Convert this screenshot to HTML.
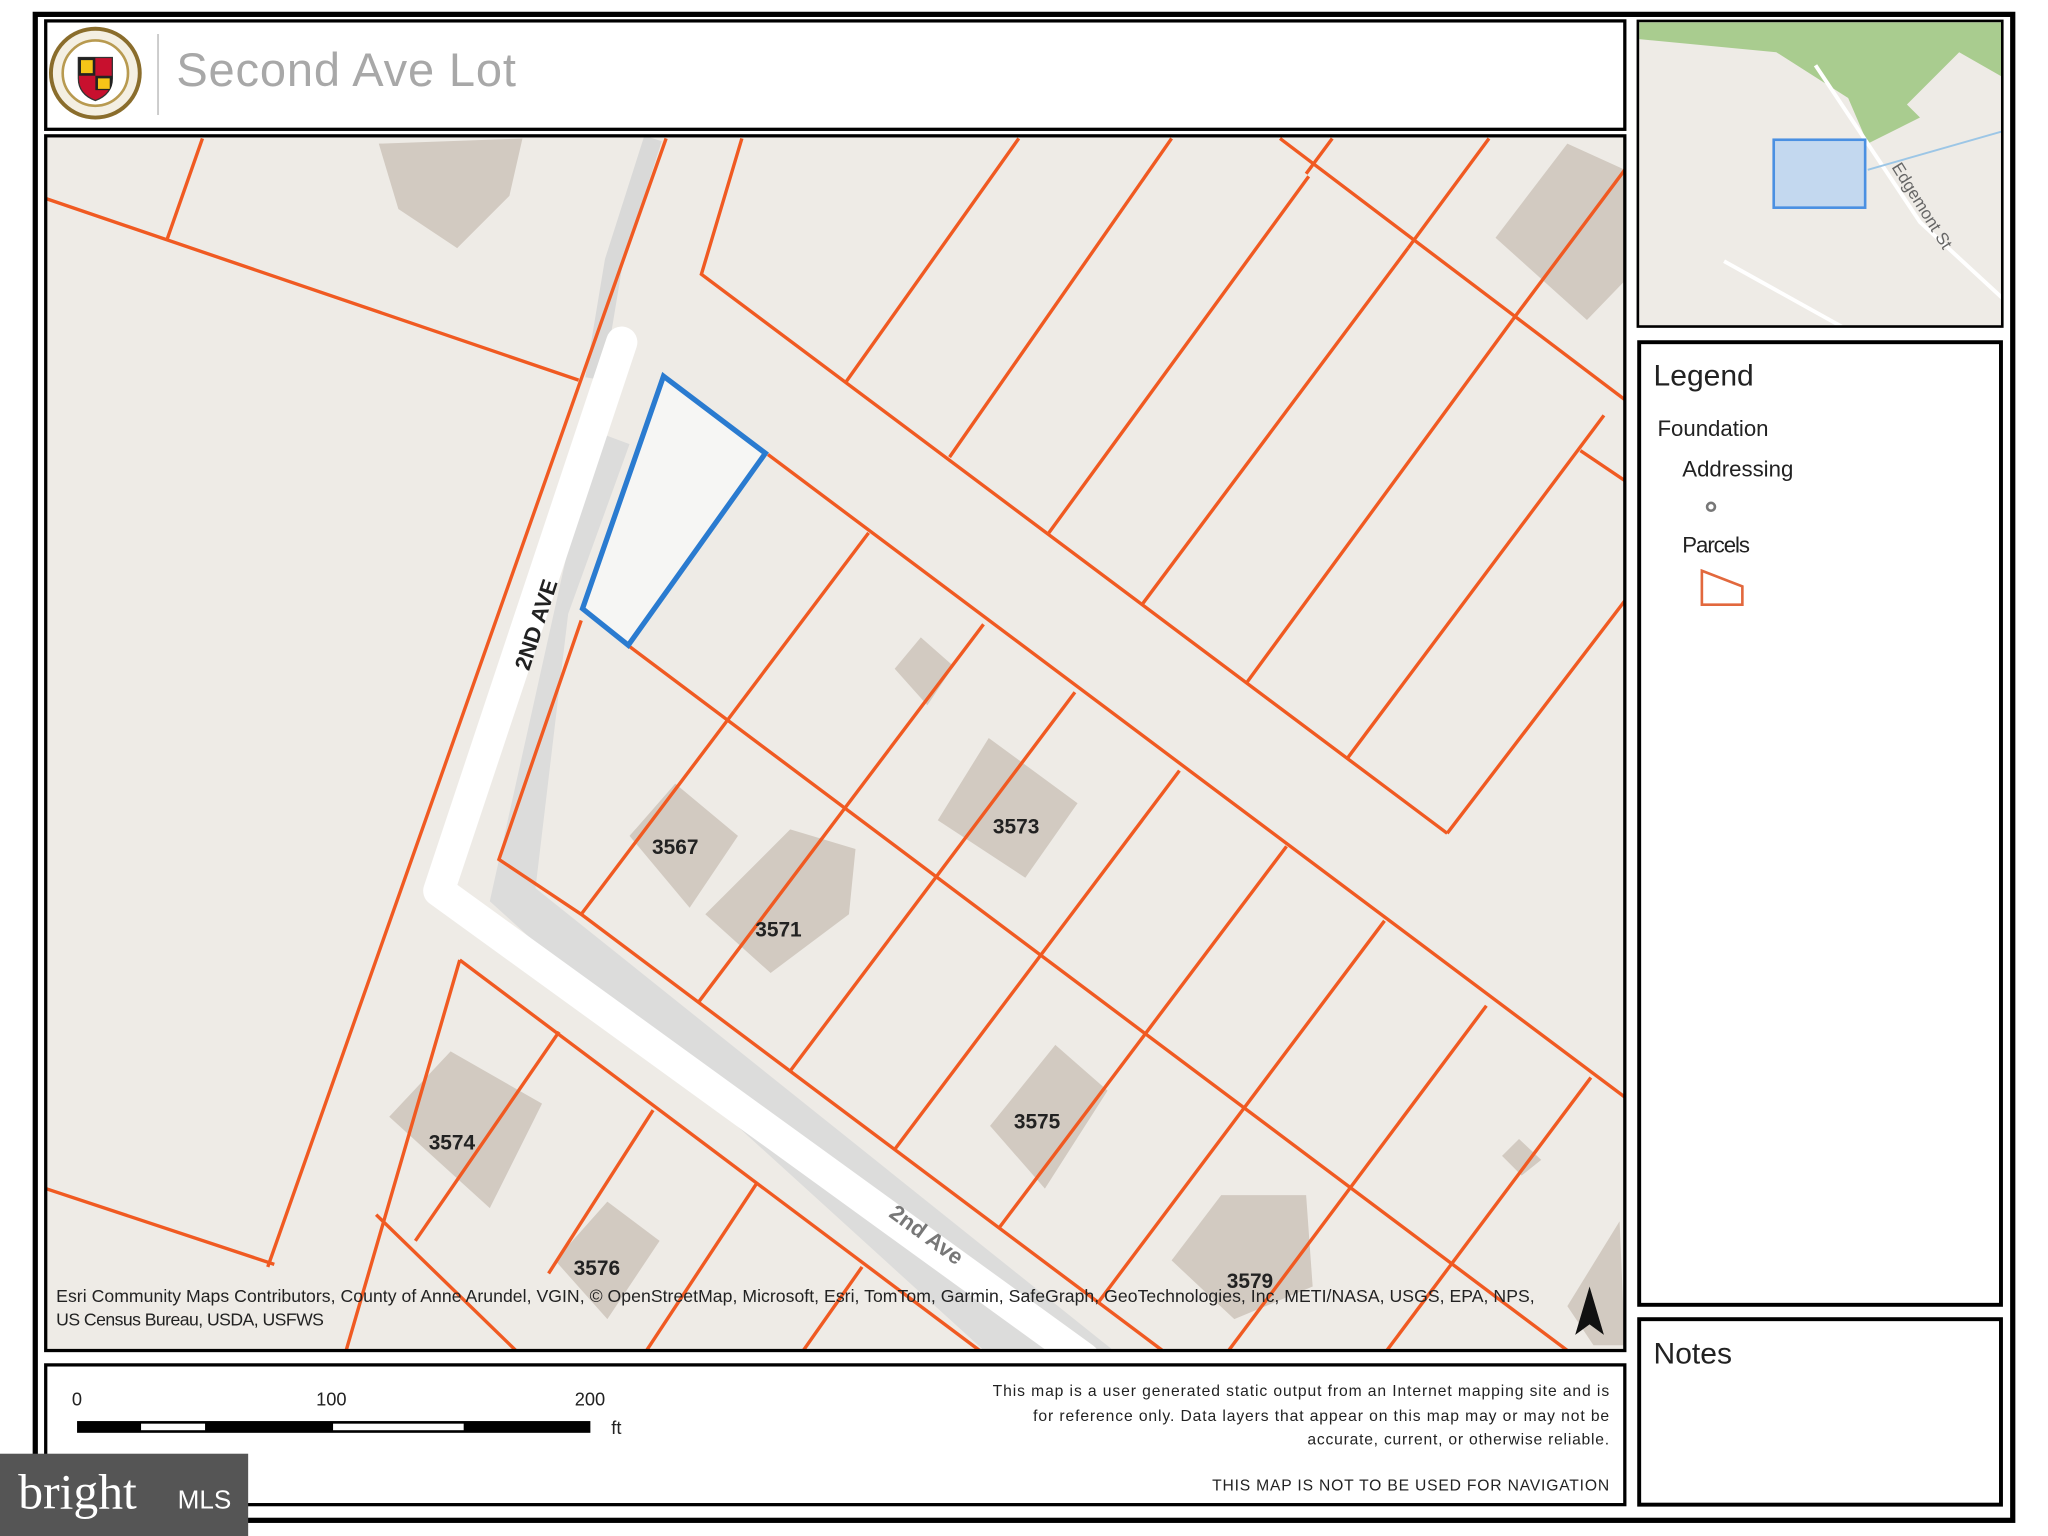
<!DOCTYPE html>
<html><head><meta charset="utf-8"><style>html,body{margin:0;padding:0;background:#fff;overflow:hidden}svg{display:block}</style></head>
<body>
<svg width="2048" height="1536" viewBox="0 0 1568 1176" preserveAspectRatio="none" xmlns="http://www.w3.org/2000/svg" font-family="Liberation Sans, sans-serif">
<rect width="1568" height="1176" fill="#fff"/>
<rect x="27" y="11" width="1514" height="1153" fill="none" stroke="#000" stroke-width="4"/>
<rect x="35" y="16" width="1209" height="83" fill="#fff" stroke="#000" stroke-width="2.5"/>
<circle cx="73" cy="56" r="34" fill="#f4efe2" stroke="#8a6d2c" stroke-width="3"/>
<circle cx="73" cy="56" r="25" fill="#fff" stroke="#b89a50" stroke-width="2"/>
<path d="M60 44h26v16q0 12-13 17q-13-5-13-17z" fill="#c8102e" stroke="#333" stroke-width="1"/>
<path d="M60 44h13v14h-13zM73 58h13v3q0 5-2 8h-11z" fill="#222"/>
<path d="M62 46h9v10h-9zM75 60h9v8h-9z" fill="#f5c518"/>
<line x1="121" y1="26" x2="121" y2="88" stroke="#ccc" stroke-width="1.5"/>
<text x="135" y="66" font-size="36" fill="#a8a8a8" textLength="260">Second Ave Lot</text>
<defs><clipPath id="mc"><rect x="36" y="105" width="1207" height="928"/></clipPath>
<clipPath id="oc"><rect x="1255" y="17" width="277" height="232"/></clipPath></defs>
<rect x="35" y="104" width="1209" height="930" fill="#eeebe6"/>
<g clip-path="url(#mc)">
<polygon points="455,330 482,340 435,470 410,680 860,1040 760,1040 375,690" fill="#dcdcdb"/>
<path d="M500 106 L470 200 L455 290" stroke="#d9d9d8" stroke-width="14" fill="none"/>
<path d="M476 262 L336 682 L830 1040" stroke="#fff" stroke-width="24" fill="none" stroke-linejoin="round" stroke-linecap="round"/>
<g fill="#d2cac1">
<polygon points="482,640 517,600 565,640 528,695"/>
<polygon points="540,700 605,635 655,650 650,700 590,745"/>
<polygon points="718,628 757,565 825,615 785,672"/>
<polygon points="758,862 808,800 848,835 800,910"/>
<polygon points="298,855 345,805 415,845 375,925"/>
<polygon points="425,965 465,920 505,950 465,1010"/>
<polygon points="897,965 935,915 1000,915 1005,985 945,1010"/>
<polygon points="685,512 705,488 730,510 710,540"/>
<polygon points="1150,885 1163,872 1180,888 1165,900"/>
<polygon points="290,110 400,106 390,150 350,190 305,160"/>
<polygon points="1145,182 1200,110 1244,130 1244,215 1215,245"/>
<polygon points="1200,1000 1240,935 1244,1030 1220,1030"/>
</g>
<g stroke="#f05a22" stroke-width="2.6" fill="none">
<path d="M35 152 L443 291"/><path d="M155 106 L128 183"/>
<path d="M510 106 L205 970"/><path d="M35 910 L210 968"/>
<path d="M568 106 L537 210 L1108 638"/>
<path d="M588 348 L1260 852"/><path d="M482 495 L1244 1067"/><path d="M445 700 L890 1034"/>
<path d="M445 475 L382 658 L445 700"/>
<path d="M665 408 L445 700"/><path d="M753 478 L535 767"/><path d="M823 530 L605 820"/>
<path d="M903 590 L685 880"/><path d="M985 648 L765 940"/><path d="M1060 705 L841 997"/>
<path d="M1138 770 L910 1075"/><path d="M1218 825 L990 1130"/>
<path d="M980 106 L1244 306"/>
<path d="M648 292 L780 106"/><path d="M727 350 L897 106"/><path d="M803 408 L1002 135"/>
<path d="M875 462 L1078 190"/><path d="M955 522 L1158 245"/><path d="M1032 580 L1228 318"/>
<path d="M1108 638 L1244 460"/><path d="M1078 190 L1140 106"/><path d="M1158 245 L1244 130"/>
<path d="M1000 133 L1020 106"/><path d="M1210 345 L1244 368"/>
<path d="M352 735 L750 1034"/><path d="M352 735 L265 1034"/><path d="M288 930 L395 1034"/>
<path d="M428 790 L318 950"/><path d="M500 850 L420 975"/><path d="M580 905 L495 1034"/><path d="M660 970 L615 1034"/>
</g>
<polygon points="508,288 586,347 481,494 446,466" fill="#f6f6f4" stroke="#2a7bd0" stroke-width="4"/>
<g font-size="16" font-weight="bold" fill="#222" text-anchor="middle">
<text x="517" y="654">3567</text><text x="596" y="717">3571</text><text x="778" y="638">3573</text>
<text x="794" y="864">3575</text><text x="346" y="880">3574</text><text x="457" y="976">3576</text><text x="957" y="986">3579</text>
</g>
<text x="0" y="0" font-size="17" font-weight="bold" fill="#222" text-anchor="middle" transform="translate(416,480) rotate(-72)">2ND AVE</text>
<text x="0" y="0" font-size="17" font-weight="bold" fill="#777" text-anchor="middle" transform="translate(706,950) rotate(36)">2nd Ave</text>
<g font-size="13.5" fill="#222"><text x="43" y="997" textLength="1132">Esri Community Maps Contributors, County of Anne Arundel, VGIN, © OpenStreetMap, Microsoft, Esri, TomTom, Garmin, SafeGraph, GeoTechnologies, Inc, METI/NASA, USGS, EPA, NPS,</text>
<text x="43" y="1015" textLength="205">US Census Bureau, USDA, USFWS</text></g>
<polygon points="1217,985 1206,1022 1217,1014 1228,1022" fill="#111"/>
</g>
<rect x="35" y="104" width="1209" height="930" fill="none" stroke="#000" stroke-width="2.5"/>
<rect x="35" y="1045" width="1209" height="107" fill="#fff" stroke="#000" stroke-width="2.5"/>
<g font-size="14" fill="#222"><text x="55" y="1076">0</text><text x="242" y="1076">100</text><text x="440" y="1076">200</text><text x="468" y="1098">ft</text></g>
<rect x="59" y="1088" width="393" height="9" fill="#000"/>
<rect x="108" y="1090" width="49" height="5" fill="#fff"/><rect x="255" y="1090" width="100" height="5" fill="#fff"/>
<g font-size="12" fill="#222"><text x="760" y="1069" textLength="472">This map is a user generated static output from an Internet mapping site and is</text>
<text x="791" y="1088" textLength="441">for reference only. Data layers that appear on this map may or may not be</text>
<text x="1001" y="1106" textLength="231">accurate, current, or otherwise reliable.</text>
<text x="928" y="1141" textLength="304">THIS MAP IS NOT TO BE USED FOR NAVIGATION</text></g>
<rect x="1254" y="16" width="279" height="234" fill="#eeebe6"/>
<g clip-path="url(#oc)">
<polygon points="1255,17 1535,17 1535,60 1500,40 1460,80 1470,90 1430,110 1415,75 1360,40 1255,30" fill="#a9cc8f"/>
<path d="M1390 50 L1470 170 L1535 230" stroke="#fff" stroke-width="3" fill="none"/>
<path d="M1320 200 L1410 250" stroke="#fff" stroke-width="3" fill="none"/>
<path d="M1430 130 L1535 100" stroke="#9cc6e6" stroke-width="1.5" fill="none"/>
<rect x="1358" y="107" width="70" height="52" fill="#c3d8ef" stroke="#4a90e2" stroke-width="2"/>
<text x="0" y="0" font-size="13" fill="#666" transform="translate(1448,128) rotate(58)">Edgemont St</text>
</g>
<rect x="1254" y="16" width="279" height="234" fill="none" stroke="#000" stroke-width="2"/>
<rect x="1255" y="262" width="277" height="737" fill="#fff" stroke="#000" stroke-width="3"/>
<text x="1266" y="295" font-size="23" fill="#222">Legend</text>
<text x="1269" y="334" font-size="17" fill="#222">Foundation</text>
<text x="1288" y="365" font-size="17" fill="#222">Addressing</text>
<circle cx="1310" cy="388" r="3" fill="none" stroke="#777" stroke-width="2"/>
<text x="1288" y="423" font-size="17" fill="#222" letter-spacing="-0.8">Parcels</text>
<polygon points="1303,437 1334,449 1334,463 1303,463" fill="#fff" stroke="#e2683d" stroke-width="2"/>
<rect x="1255" y="1010" width="277" height="142" fill="#fff" stroke="#000" stroke-width="3"/>
<text x="1266" y="1044" font-size="23" fill="#222">Notes</text>
<rect x="0" y="1113" width="190" height="63" fill="#555"/>
<text x="14" y="1155" font-size="38" fill="#fff" font-family="Liberation Serif, serif">bright</text>
<text x="136" y="1155" font-size="20" fill="#fff">MLS</text>
</svg>
</body></html>
